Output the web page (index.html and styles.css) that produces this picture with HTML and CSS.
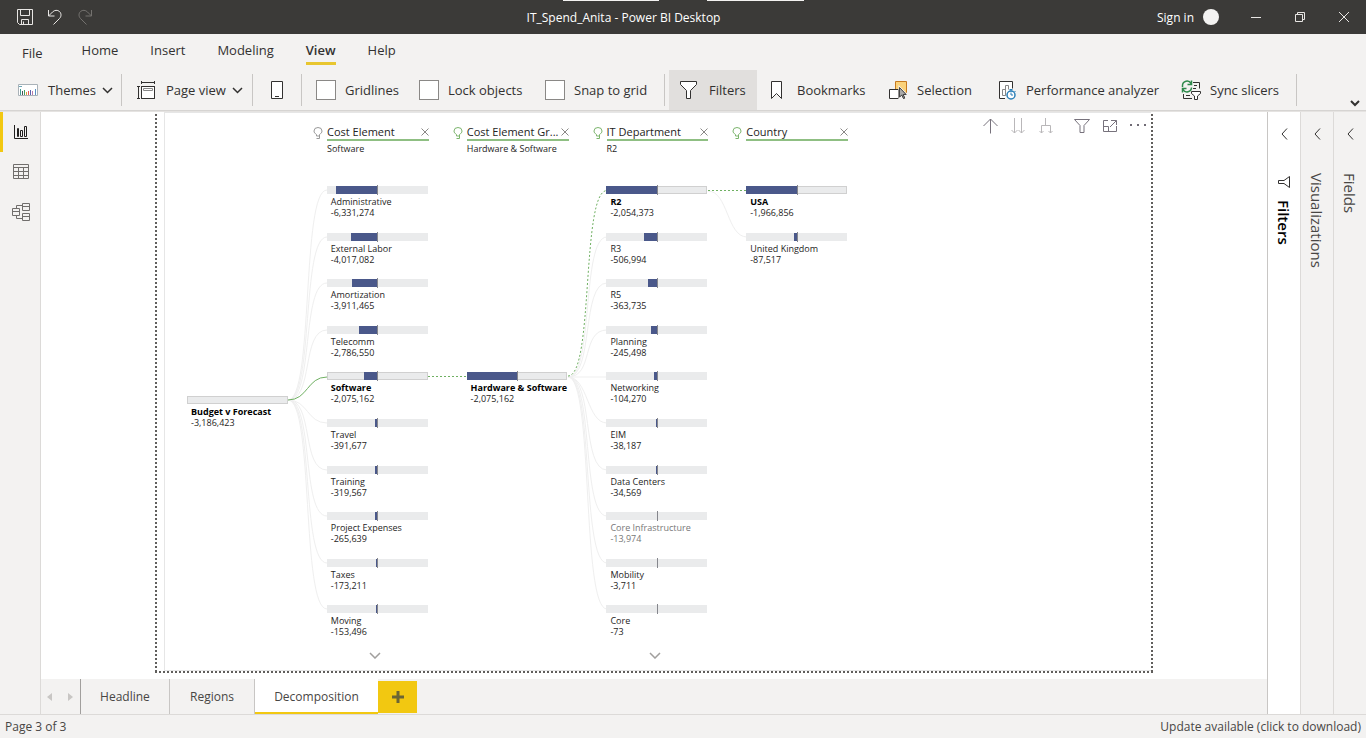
FILE: index.html
```html
<!DOCTYPE html>
<html lang="en">
<head>
<meta charset="utf-8">
<title>IT_Spend_Anita - Power BI Desktop</title>
<link rel="stylesheet" href="styles.css">
</head>
<body>
<div class="app">
  <header class="titlebar">
    <div class="quick">
      <button aria-label="Save"><svg width="16" height="16" viewBox="0 0 16 16"><path d="M.5.5h15v15h-13l-2-2zM3.500.5v6h9v-6M4.500 15.500v-5h7v5M6.500 12.500v3"/></svg></button>
      <button aria-label="Undo"><svg width="16" height="16" viewBox="0 0 16 16"><path d="M1.500 1v6h6M1.500 7l4-4c2-2 5-2.300 7-.5s2 5 0 7l-6 6"/></svg></button>
      <button aria-label="Redo" class="dim"><svg width="16" height="16" viewBox="0 0 16 16"><path d="M14.500 1v6h-6M14.500 7l-4-4c-2-2-5-2.300-7-.5s-2 5 0 7l6 6"/></svg></button>
    </div>
    <h1 class="title">IT_Spend_Anita - Power BI Desktop</h1>
    <div class="account">
      <button class="signin">Sign in <span class="avatar"></span></button>
      <button class="win" aria-label="Minimize"><svg width="12" height="12" viewBox="0 0 12 12"><path d="M1 6.500h10"/></svg></button>
      <button class="win" aria-label="Restore"><svg width="12" height="12" viewBox="0 0 12 12"><path d="M1.500 3.500h7v7h-7zM3.500 3.500v-2h7v7h-2"/></svg></button>
      <button class="win" aria-label="Close"><svg width="12" height="12" viewBox="0 0 12 12"><path d="M1 1l10 10M11 1L1 11"/></svg></button>
    </div>
    <span class="strip strip-a"></span><span class="strip strip-b"></span>
  </header>

  <nav class="menu">
    <button class="file">File</button>
    <button>Home</button>
    <button>Insert</button>
    <button>Modeling</button>
    <button class="current">View</button>
    <button>Help</button>
  </nav>

  <div class="ribbon">
    <div class="group g-themes">
      <button class="tool">
        <svg width="20" height="12" viewBox="0 0 20 12"><path d="M.5.5h19v11H.5z" fill="#fff" stroke="#a9b2b8"/><path d="M1 2.500h3" stroke="#6da7b8"/><path d="M2.500 11V5" stroke="#3f9e94"/><path d="M4.500 11V7" stroke="#49525a"/><path d="M6.500 11V6" stroke="#3f9e64"/><path d="M8.500 11V8" stroke="#d7a33e"/><path d="M10.500 11V7" stroke="#e3595a"/><path d="M12.500 11V6" stroke="#5865b0"/><path d="M14.500 11V7" stroke="#b77aaa"/><path d="M17.500 11V5" stroke="#5a91c4"/></svg>
        <span>Themes</span>
        <svg class="chev" width="11" height="7" viewBox="0 0 11 7"><path d="M1 1l4.500 4.500L10 1"/></svg>
      </button>
    </div>
    <div class="group g-view">
      <button class="tool">
        <svg width="19" height="19" viewBox="0 0 19 19"><path d="M4.500 5.500h13v12h-13z" fill="#fff"/><path d="M4.500 5.500h13v12h-13zM4.500 0v3M17.500 0v3M4.500 1.500h13M0 5.500h3M0 17.500h3M1.500 5.500v12"/><path d="M6.500 7.500h9v2h-9z" stroke="#888"/></svg>
        <span>Page view</span>
        <svg class="chev" width="11" height="7" viewBox="0 0 11 7"><path d="M1 1l4.500 4.500L10 1"/></svg>
      </button>
    </div>
    <div class="group g-mobile">
      <button class="tool" aria-label="Mobile layout"><svg width="12" height="18" viewBox="0 0 12 18"><path d="M.5.5h11v17H.5z" fill="#fff"/><path d="M4 15.500h4"/></svg></button>
    </div>
    <div class="group g-checks">
      <label><input type="checkbox">Gridlines</label>
      <label><input type="checkbox">Lock objects</label>
      <label><input type="checkbox">Snap to grid</label>
    </div>
    <div class="group g-panes">
      <button class="tool w-filters on"><svg width="20" height="20" viewBox="0 0 20 20"><path d="M.5 1.500h16v3l-6 6v8h-4v-8l-6-6z" fill="#fff"/></svg><span>Filters</span></button>
      <button class="tool w-book"><svg width="20" height="20" viewBox="0 0 20 20"><path d="M3.500 1.500h10v17l-5-5-5 5z" fill="#fff"/></svg><span>Bookmarks</span></button>
      <button class="tool w-select"><svg width="20" height="20" viewBox="0 0 20 20"><path d="M7.500 1.500h11v11h-11z" fill="#fbd27a" stroke="#c77a1f"/><path d="M1.500 9.500h9v9h-9z" fill="#fff"/><path d="M11.500 7.500v10l2.300-2 1.700 3.500 1.700-.8-1.600-3.400h3z" fill="#555" stroke="#f3f2f1" stroke-width="2" paint-order="stroke"/><path d="M11.500 7.500v9.500l2.300-2 1.700 3.500 1.200-.6-1.600-3.400h3z" fill="#aaa" stroke="#444"/></svg><span>Selection</span></button>
      <button class="tool w-perf"><svg width="20" height="20" viewBox="0 0 20 20"><path d="M8 18.500H2.500v-17h13v7" fill="#fff"/><path d="M5.500 15.500v-6h3v6zM8.500 15.500v-10h3v4" stroke="#888"/><circle cx="14" cy="15" r="4" fill="#fff" stroke="#2b7fb8" stroke-width="1.500"/><path d="M12.500 9.500h3M14 9.500v2M14 12.500V15h2M17.500 11l1 1" stroke="#2b7fb8"/></svg><span>Performance analyzer</span></button>
      <button class="tool w-sync"><svg width="20" height="20" viewBox="0 0 20 20"><path d="M12 2.500h6.500v6M13 5.500h3M2.500 14v4.500H11M5 15.500h4M12 8.500h3"/><path d="M1.500 7V5.500A4.500 4.500 0 0 1 10 3.500M10.500.5v4h-4M10.500 7.500A4.500 4.500 0 0 1 2 9.500M1.500 12.500v-4h4" stroke="#2f8a4c" stroke-width="1.500"/><path d="M10.500 11.500h9v2l-3 2.500v3.500h-3V16l-3-2.500z" fill="#fff"/></svg><span>Sync slicers</span></button>
    </div>
    <button class="collapse" aria-label="Collapse ribbon"><svg width="10" height="7" viewBox="0 0 10 7"><path d="M1 1l4 4 4-4"/></svg></button>
  </div>

  <div class="body">
    <nav class="views">
      <button class="active" aria-label="Report"><svg width="16" height="16" viewBox="0 0 16 16"><path d="M1.500 1v13.500H15M4.500 4.500h1v8h-1zM7.500 6.500h2v6h-2zM11.500 2.500h2v10h-2z"/></svg></button>
      <button aria-label="Data"><svg width="16" height="16" viewBox="0 0 16 16"><path d="M.5.5h15v14H.5zM.5 3.500h15M.5 7.500h15M.5 11.500h15M5.500 3.500v11M10.500 3.500v11"/></svg></button>
      <button aria-label="Model"><svg width="18" height="18" viewBox="0 0 18 18"><path d="M.5 5.500h7v7h-7zM.5 8.500h7M10.500.5h7v7h-7zM10.500 3.500h7M10.500 10.500h7v7h-7zM10.500 13.500h7M4.500 5.500v-3h6M4.500 12.500v3h6"/></svg></button>
    </nav>

    <main class="work">
      <section class="canvas">
        <div class="frame">
          <div class="visual">
            <div class="top">
              <div class="levels">
                <div class="level grey"><svg class="bulb" viewBox="0 0 9 12"><path d="M3 9V7.500C1.500 6.500.5 5.500.5 4a4 3.500 0 0 1 8 0c0 1.500-1 2.500-2.500 3.500V9zM3 11.500h3V9"/></svg><div class="head"><div class="name"><span>Cost Element</span><button aria-label="Remove"><svg width="8" height="8" viewBox="0 0 8 8"><path d="M.5.5l7 7M7.500.5l-7 7"/></svg></button></div><p>Software</p></div></div>
                <div class="level"><svg class="bulb" viewBox="0 0 9 12"><path d="M3 9V7.500C1.500 6.500.5 5.500.5 4a4 3.500 0 0 1 8 0c0 1.500-1 2.500-2.500 3.500V9zM3 11.500h3V9"/></svg><div class="head"><div class="name"><span>Cost Element Gr...</span><button aria-label="Remove"><svg width="8" height="8" viewBox="0 0 8 8"><path d="M.5.5l7 7M7.500.5l-7 7"/></svg></button></div><p>Hardware &amp; Software</p></div></div>
                <div class="level"><svg class="bulb" viewBox="0 0 9 12"><path d="M3 9V7.500C1.500 6.500.5 5.500.5 4a4 3.500 0 0 1 8 0c0 1.500-1 2.500-2.500 3.500V9zM3 11.500h3V9"/></svg><div class="head"><div class="name"><span>IT Department</span><button aria-label="Remove"><svg width="8" height="8" viewBox="0 0 8 8"><path d="M.5.5l7 7M7.500.5l-7 7"/></svg></button></div><p>R2</p></div></div>
                <div class="level"><svg class="bulb" viewBox="0 0 9 12"><path d="M3 9V7.500C1.500 6.500.5 5.500.5 4a4 3.500 0 0 1 8 0c0 1.500-1 2.500-2.500 3.500V9zM3 11.500h3V9"/></svg><div class="head"><div class="name"><span>Country</span><button aria-label="Remove"><svg width="8" height="8" viewBox="0 0 8 8"><path d="M.5.5l7 7M7.500.5l-7 7"/></svg></button></div></div></div>
              </div>
              <div class="actions">
                <button aria-label="Drill up"><svg width="16" height="16" viewBox="0 0 16 16"><path d="M8.500 15.500V1M1.500 8l7-7 7 7"/></svg></button>
                <button class="faint" aria-label="Drill down"><svg width="16" height="16" viewBox="0 0 16 16"><path d="M4.500 0v15M1.500 12l3 3 3-3M11.500 0v15M8.500 12l3 3 3-3"/></svg></button>
                <button class="faint" aria-label="Expand all"><svg width="16" height="16" viewBox="0 0 16 16"><path d="M7.500 0v7M3.500 15V7.500h9V15M1.500 13l2 2 2-2M10.500 13l2 2 2-2"/></svg></button>
                <button class="apart" aria-label="Filters on visual"><svg width="16" height="16" viewBox="0 0 16 16"><path d="M.5 1.500h15l-5.500 6v7H6v-7z"/></svg></button>
                <button aria-label="Focus mode"><svg width="16" height="16" viewBox="0 0 16 16"><path d="M6 2.500H1.500v11h13V8M9 2.500h5.500V7M14.500 2.500L8 9M1.500 8.500h5v5"/></svg></button>
                <button aria-label="More options"><svg width="16" height="16" viewBox="0 0 16 16"><path d="M0 6h2v2H0zM7 6h2v2H7zM14 6h2v2h-2z" fill="#706b75" stroke="none"/></svg></button>
              </div>
            </div>

            <div class="tree">
              <svg class="links" viewBox="0 0 660 466" preserveAspectRatio="none">
                <g class="link">
                  <path d="M101 214C127 214 114 4 140 4M101 214C127 214 114 51 140 51M101 214C127 214 114 97 140 97M101 214C127 214 114 144 140 144M101 214C121 214 120 237 140 237M101 214C127 214 114 284 140 284M101 214C127 214 114 330 140 330M101 214C127 214 114 377 140 377M101 214C127 214 114 423 140 423"/>
                  <path d="M381 191C407 191 394 51 420 51M381 191C407 191 394 97 420 97M381 191C407 191 394 144 420 144M381 191H420M381 191C401 191 400 237 420 237M381 191C407 191 394 284 420 284M381 191C407 191 394 330 420 330M381 191C407 191 394 377 420 377M381 191C407 191 394 423 420 423"/>
                  <path d="M521 5C541 5 540 51 560 51"/>
                </g>
                <path class="picked" d="M101 214C121 214 120 191 140 191"/>
                <path class="picked dotted" d="M241 190.500H280M381 190C407 190 394 4.500 420 4.500M521 4.500H560"/>
              </svg>

              <div class="node sel root"><div class="bar"></div><b>Budget v Forecast</b><span>-3,186,423</span></div>

              <div class="node c2 r1"><div class="bar mid"><i style="width:41%"></i></div><em>Administrative</em><span>-6,331,274</span></div>
              <div class="node c2 r2"><div class="bar mid"><i style="width:26%"></i></div><em>External Labor</em><span>-4,017,082</span></div>
              <div class="node c2 r3"><div class="bar mid"><i style="width:25.300%"></i></div><em>Amortization</em><span>-3,911,465</span></div>
              <div class="node c2 r4"><div class="bar mid"><i style="width:18%"></i></div><em>Telecomm</em><span>-2,786,550</span></div>
              <div class="node c2 r5 sel"><div class="bar mid"><i style="width:13.400%"></i></div><b>Software</b><span>-2,075,162</span></div>
              <div class="node c2 r6"><div class="bar mid"><i style="width:2.600%"></i></div><em>Travel</em><span>-391,677</span></div>
              <div class="node c2 r7"><div class="bar mid"><i style="width:2.100%"></i></div><em>Training</em><span>-319,567</span></div>
              <div class="node c2 r8"><div class="bar mid"><i style="width:1.800%"></i></div><em>Project Expenses</em><span>-265,639</span></div>
              <div class="node c2 r9"><div class="bar mid"><i style="width:1.100%"></i></div><em>Taxes</em><span>-173,211</span></div>
              <div class="node c2 r10"><div class="bar mid"><i style="width:1%"></i></div><em>Moving</em><span>-153,496</span></div>

              <div class="node c3 r5 sel"><div class="bar mid"><i style="width:50%"></i></div><b>Hardware &amp; Software</b><span>-2,075,162</span></div>

              <div class="node c4 r1 sel"><div class="bar mid"><i style="width:50%"></i></div><b>R2</b><span>-2,054,373</span></div>
              <div class="node c4 r2"><div class="bar mid"><i style="width:12.300%"></i></div><em>R3</em><span>-506,994</span></div>
              <div class="node c4 r3"><div class="bar mid"><i style="width:8.900%"></i></div><em>R5</em><span>-363,735</span></div>
              <div class="node c4 r4"><div class="bar mid"><i style="width:6%"></i></div><em>Planning</em><span>-245,498</span></div>
              <div class="node c4 r5"><div class="bar mid"><i style="width:2.500%"></i></div><em>Networking</em><span>-104,270</span></div>
              <div class="node c4 r6"><div class="bar mid"><i style="width:1%"></i></div><em>EIM</em><span>-38,187</span></div>
              <div class="node c4 r7"><div class="bar mid"><i style="width:0.800%"></i></div><em>Data Centers</em><span>-34,569</span></div>
              <div class="node c4 r8 fade"><div class="bar mid"><i style="width:0.300%"></i></div><em>Core Infrastructure</em><span>-13,974</span></div>
              <div class="node c4 r9"><div class="bar mid"></div><em>Mobility</em><span>-3,711</span></div>
              <div class="node c4 r10"><div class="bar mid"></div><em>Core</em><span>-73</span></div>

              <div class="node c5 r1 sel"><div class="bar mid"><i style="width:50%"></i></div><b>USA</b><span>-1,966,856</span></div>
              <div class="node c5 r2"><div class="bar mid"><i style="width:2.200%"></i></div><em>United Kingdom</em><span>-87,517</span></div>

              <button class="more c2" aria-label="Show more cost elements"><svg width="12" height="7" viewBox="0 0 12 7"><path d="M1 1l5 5 5-5"/></svg></button>
              <button class="more c4" aria-label="Show more departments"><svg width="12" height="7" viewBox="0 0 12 7"><path d="M1 1l5 5 5-5"/></svg></button>
            </div>
          </div>
        </div>
      </section>

      <nav class="pages">
        <div class="arrows"><button aria-label="Previous page"><svg width="5" height="8" viewBox="0 0 5 8"><path d="M5 0v8L0 4z"/></svg></button><button aria-label="Next page"><svg width="5" height="8" viewBox="0 0 5 8"><path d="M0 0v8l5-4z"/></svg></button></div>
        <button class="page p1">Headline</button>
        <button class="page p2">Regions</button>
        <button class="page p3 open">Decomposition</button>
        <button class="add" aria-label="New page"><svg width="12" height="12" viewBox="0 0 12 12"><path d="M6 0v12M0 6h12"/></svg></button>
      </nav>
    </main>

    <aside class="pane white">
      <button aria-label="Expand filters"><svg width="7" height="12" viewBox="0 0 7 12"><path d="M6 .5L1 6l5 5.500"/></svg></button>
      <h2><svg width="12" height="12" viewBox="0 0 12 12"><path d="M11.500.5v11L6 7.500H.5v-3H6z"/></svg>Filters</h2>
    </aside>
    <aside class="pane">
      <button aria-label="Expand visualizations"><svg width="7" height="12" viewBox="0 0 7 12"><path d="M6 .5L1 6l5 5.500"/></svg></button>
      <h2>Visualizations</h2>
    </aside>
    <aside class="pane">
      <button aria-label="Expand fields"><svg width="7" height="12" viewBox="0 0 7 12"><path d="M6 .5L1 6l5 5.500"/></svg></button>
      <h2>Fields</h2>
    </aside>
  </div>

  <footer class="status"><span>Page 3 of 3</span><a href="#">Update available (click to download)</a></footer>
</div>
</body>
</html>
```
FILE: styles.css
```css
* { box-sizing: border-box; }
body { margin: 0; font-family: "Open Sans", "Noto Sans", sans-serif; font-size: 13px; color: #323130; background: #f3f2f1; }
button { font: inherit; color: inherit; background: none; border: 0; padding: 0; margin: 0; }
svg { display: block; flex: none; fill: none; stroke: #323130; stroke-width: 1; }
h1, h2, p { margin: 0; }
.app { min-height: 100vh; display: flex; flex-direction: column; }

/* Title bar */
.titlebar { position: relative; display: flex; align-items: center; height: 34px; background: #3b3a38; color: #fff; font-size: 12px; }
.titlebar svg { stroke: #e8e6e4; }
.quick { display: flex; gap: 14px; width: 110px; padding-left: 17px; }
.quick .dim svg { stroke: #74726f; }
.title { flex: 1; text-align: center; font-size: 12px; font-weight: 400; }
.account { display: flex; align-items: center; width: 229px; padding-left: 20px; }
.signin { display: flex; align-items: center; gap: 9px; width: 73px; white-space: nowrap; }
.avatar { width: 16px; height: 16px; border-radius: 50%; background: #f3f2f1; }
.win { display: flex; justify-content: center; width: 44px; }
.win:nth-of-type(2) { margin-left: 4px; }
.strip { position: absolute; top: 0; height: 1px; background: #f3f2f1; }
.strip-a { left: 563px; width: 96px; }
.strip-b { left: 707px; width: 97px; }

/* Menu */
.menu { display: flex; gap: 32px; height: 36px; padding-left: 22px; line-height: 18px; }
.menu button { height: 31px; padding-top: 3px; border-bottom: 3px solid transparent; }
.menu .file { padding-top: 9px; margin-right: 7px; }
.menu .current { font-weight: 600; border-color: #e8c62f; }

/* Ribbon */
.ribbon { display: flex; align-items: center; height: 41px; border-bottom: 1px solid #d6d4d2; position: relative; white-space: nowrap; }
.group { display: flex; align-items: center; height: 32px; border-right: 1px solid #c8c6c4; }
.tool { display: flex; align-items: center; gap: 10px; height: 40px; }
.tool .chev { margin-left: -4px; }
.chev { stroke-width: 1.5; }
.g-themes { width: 122px; padding-left: 18px; }
.g-view { width: 131px; padding-left: 15px; }
.g-mobile { width: 49px; justify-content: center; }
.g-checks { display: grid; grid-template-columns: 103px 126px 1fr; width: 363px; padding-left: 14px; }
.g-checks label { display: flex; align-items: center; gap: 9px; }
.g-checks input { appearance: none; width: 20px; height: 20px; margin: 0; background: #fff; border: 1px solid #8a8886; }
.g-panes { width: 632px; padding-left: 4px; }
.g-panes .tool { gap: 9px; padding-left: 11px; }
.on { background: #e1dfdd; }
.w-filters { width: 88px; }
.w-book { width: 120px; }
.w-select { width: 109px; }
.w-perf { width: 184px; }
.w-sync { width: 120px; }
.collapse { position: absolute; right: 6px; bottom: 3px; }
.collapse svg { stroke-width: 2; }

/* Body */
.body { flex: 1; display: flex; border-top: 1px solid #e5e3e1; }
.views { width: 41px; border-right: 1px solid #dcdad8; }
.views button { display: flex; align-items: center; justify-content: center; width: 40px; height: 40px; padding-right: 1px; border-left: 3px solid transparent; }
.views svg { stroke: #706e6c; }
.views .active { border-color: #f2c811; }
.views .active svg { stroke: #201f1e; }
.work { flex: 1; display: flex; flex-direction: column; min-width: 0; }
.canvas { flex: 1; background: #fff; padding: 0 114px 6px; }

/* Report page with its dotted outline */
.frame {
  height: 100%;
  padding: 0 2px 2px 9px;
  background:
    repeating-linear-gradient(180deg, transparent 0 2px, #605e5c 2px 4px) left top / 2px 100% no-repeat,
    repeating-linear-gradient(180deg, transparent 0 2px, #605e5c 2px 4px) right top / 2px 100% no-repeat,
    repeating-linear-gradient(90deg, #605e5c 0 2px, transparent 2px 4px) left bottom / 100% 2px no-repeat;
}
.visual { height: 100%; border: 1px solid #e6e6e6; border-right: 0; padding: 0 5px 0 22px; }
.top { display: flex; justify-content: space-between; height: 73px; }
.levels { display: grid; grid-template-columns: repeat(4, 1fr); column-gap: 24px; width: 535px; margin-left: 126px; padding-top: 12px; }
.level { display: flex; gap: 4px; }
.bulb { width: 10px; height: 12px; margin-top: 2px; stroke: #7cb56d; }
.grey .bulb { stroke: #999; }
.head { flex: 1; min-width: 0; color: #252423; }
.name { display: flex; align-items: center; justify-content: space-between; height: 16px; border-bottom: 2px solid #8fbf83; font-size: 11px; line-height: 14px; white-space: nowrap; }
.name svg { stroke: #8a8886; }
.head p { font-size: 9px; line-height: 12px; padding-top: 2px; white-space: nowrap; }
.actions { display: flex; gap: 12px; padding-top: 5px; height: 26px; align-items: flex-start; }
.actions svg { stroke: #77727c; }
.actions .faint svg { stroke: #b9b7b9; }
.actions .apart { margin-left: 8px; }

/* Decomposition tree */
.tree { position: relative; display: grid; grid-template-columns: repeat(5, 1fr); grid-template-rows: repeat(10, 1fr); column-gap: 39px; width: 660px; height: 466px; margin-bottom: 18px; }
.links { position: absolute; inset: 0; width: 100%; height: 100%; }
.link { stroke: #efefef; }
.picked { stroke: #6fb062; }
.dotted { stroke-dasharray: 2 2; }
.node { position: relative; display: flex; flex-direction: column; font-size: 9px; line-height: 11px; color: #252423; white-space: nowrap; }
.node em, .node b, .node span { padding-left: 4px; font-style: normal; }
.node b { color: #000; font-weight: 700; }
.node.fade { color: #777; }
.bar { position: relative; flex: none; height: 8px; margin-bottom: 2px; background: #eaebec; }
.bar i { position: absolute; right: 50%; top: 0; bottom: 0; background: #4a588a; }
.mid::after { content: ""; position: absolute; left: 50%; top: -1px; bottom: -1px; width: 1px; background: #85868c; }
.sel .bar { outline: 1px solid #d0d0d0; outline-offset: -1px; }
.root { grid-column: 1; grid-row: 5 / 7; align-self: center; height: 45px; }
.c2 { grid-column: 2; } .c3 { grid-column: 3; } .c4 { grid-column: 4; } .c5 { grid-column: 5; }
.r1 { grid-row: 1; } .r2 { grid-row: 2; } .r3 { grid-row: 3; } .r4 { grid-row: 4; } .r5 { grid-row: 5; }
.r6 { grid-row: 6; } .r7 { grid-row: 7; } .r8 { grid-row: 8; } .r9 { grid-row: 9; } .r10 { grid-row: 10; }
.more { grid-row: 11; display: flex; justify-content: center; height: 7px; margin-right: 4px; margin-bottom: -7px; }
.more svg { stroke: #a19f9d; stroke-width: 1.5; }

/* Page tabs */
.pages { display: flex; height: 35px; font-size: 12px; font-weight: 500; color: #484644; }
.arrows { display: flex; align-items: center; justify-content: space-between; width: 40px; padding: 0 7px 0 6px; border-right: 1px solid #a19f9d; }
.arrows svg { fill: #c8c6c4; stroke: none; }
.page { border-right: 1px solid #c8c6c4; }
.p1 { width: 89px; }
.p2 { width: 85px; }
.p3 { width: 123px; }
.open { background: #fff; border-right: 0; border-bottom: 2px solid #f2c811; padding-top: 2px; }
.add { display: flex; align-items: center; justify-content: center; width: 39px; margin: 2px 0 1px; background: #f2c811; }
.add svg { stroke: #6b6535; stroke-width: 3; }

/* Collapsed panes */
.pane { display: flex; flex-direction: column; align-items: center; width: 33px; padding-top: 16px; border-left: 1px solid #dcdad8; }
.white { background: #fff; border-color: #c8c6c4; }
.pane h2 { display: flex; align-items: center; gap: 12px; margin-top: 33px; writing-mode: vertical-rl; font-size: 15px; line-height: 20px; font-weight: 500; color: #484644; }
.pane.white h2 { margin-top: 36px; color: #000; font-weight: 600; }

/* Status bar */
.status { display: flex; justify-content: space-between; align-items: center; height: 24px; padding: 0 5px; border-top: 1px solid #dcdad8; font-size: 12px; color: #484644; }
.status a { color: inherit; text-decoration: none; }
```
